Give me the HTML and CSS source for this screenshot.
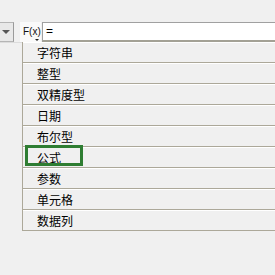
FILE: index.html
```html
<!DOCTYPE html>
<html lang="zh-CN">
<head>
<meta charset="utf-8">
<link rel="stylesheet" href="styles.css">
</head>
<body>
<div class="toolbar">
  <div class="combo"><span class="combo-arrow"></span></div>
  <div class="fx-btn"><span class="fx-label">F(x)</span><span class="fx-arrow"></span></div>
  <div class="formula-input">=</div>
</div>
<div class="below">
  <div class="left-pad"></div>
  <ul class="type-list">
    <li class="item">字符串</li>
    <li class="item">整型</li>
    <li class="item">双精度型</li>
    <li class="item">日期</li>
    <li class="item">布尔型</li>
    <li class="item">公式<span class="highlight"></span></li>
    <li class="item">参数</li>
    <li class="item">单元格</li>
    <li class="item">数据列</li>
  </ul>
</div>
</body>
</html>
```
FILE: styles.css
```css
html, body {
  margin: 0;
  padding: 0;
  background: #f0f0f0;
  width: 275px;
  height: 275px;
  overflow: hidden;
  font-family: "Noto Sans CJK SC", "Liberation Sans", sans-serif;
}

.toolbar {
  display: flex;
  margin-top: 22px;
  height: 20px;
}

.combo {
  width: 13px;
  height: 18px;
  border-top: 1px solid #b5b5b5;
  border-bottom: 1px solid #b5b5b5;
  border-right: 1px solid #9a9a9a;
  background: #e8e8e8;
  display: flex;
  align-items: center;
  justify-content: center;
}

.combo-arrow {
  width: 0;
  height: 0;
  border-left: 4px solid transparent;
  border-right: 4px solid transparent;
  border-top: 4px solid #555;
  margin-left: -2px;
}

.fx-btn {
  margin-left: 6px;
  width: 21px;
  height: 20px;
  background: #fafafa;
  position: relative;
  box-sizing: border-box;
}

.fx-label {
  display: block;
  font-family: "Liberation Sans", sans-serif;
  font-size: 10px;
  line-height: 10px;
  margin: 5px 0 0 3px;
  color: #111;
}

.fx-arrow {
  position: absolute;
  left: 15px;
  top: 17px;
  width: 0;
  height: 0;
  border-left: 2px solid transparent;
  border-right: 2px solid transparent;
  border-top: 2px solid #222;
}

.formula-input {
  flex: 1;
  margin-left: 1px;
  background: #fff;
  border-top: 1px solid #a0a0a0;
  border-left: 1px solid #a0a0a0;
  border-bottom: 2px solid #a3a195;
  height: 17px;
  line-height: 17px;
  padding-left: 3px;
  font-family: "Liberation Sans", sans-serif;
  font-size: 12px;
  color: #000;
}

.below {
  display: flex;
}

.left-pad {
  width: 22px;
  height: 1px;
  background: #dcdcdc;
}

.type-list {
  list-style: none;
  margin: 0;
  padding: 0;
  flex: 1;
  border-left: 1px solid #aca899;
}

.item {
  position: relative;
  height: 19px;
  line-height: 19px;
  border-top: 1px solid #ffffff;
  border-bottom: 1px solid #aca899;
  padding-left: 14px;
  font-size: 12px;
  color: #000;
}

.highlight {
  position: absolute;
  left: 2px;
  top: -3px;
  width: 52px;
  height: 15px;
  border: 3px solid #2e7d32;
}
```
